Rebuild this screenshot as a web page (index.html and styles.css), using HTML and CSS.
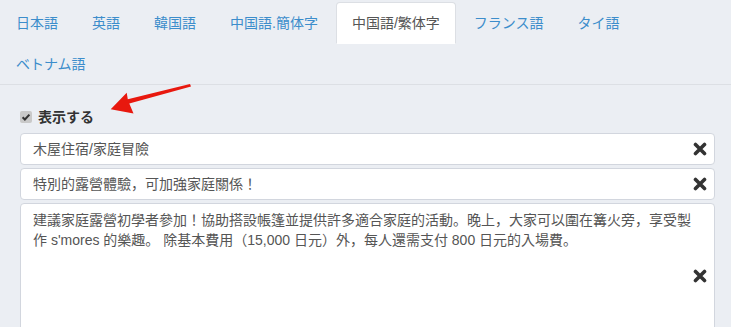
FILE: index.html
```html
<!DOCTYPE html>
<html lang="ja">
<head>
<meta charset="utf-8">
<title>翻訳</title>
<link rel="stylesheet" href="styles.css">
</head>
<body>
<div class="page">
  <ul class="tabs">
    <li class="tab"><a>日本語</a></li>
    <li class="tab"><a>英語</a></li>
    <li class="tab"><a>韓国語</a></li>
    <li class="tab"><a>中国語.簡体字</a></li>
    <li class="tab active"><a>中国語/繁体字</a></li>
    <li class="tab"><a>フランス語</a></li>
    <li class="tab"><a>タイ語</a></li>
    <li class="tab"><a>ベトナム語</a></li>
  </ul>
  <div class="pane">
    <div class="show-row">
      <span class="check"><svg viewBox="0 0 12 12" width="12" height="12"><path d="M2.6 6.2 L4.9 8.5 L9.4 3.6" fill="none" stroke="#333" stroke-width="2"/></svg></span>
      <span class="show-label">表示する</span>
      <svg class="arrow" viewBox="0 0 95 35" width="95" height="35"><path d="M10.7 29.3 L26.7 12.8 L27.8 19.3 L90 4 L91 6.6 L29.3 23.6 L33.5 33.5 Z" fill="#e8180e"/></svg>
    </div>
    <div class="field">
      <div class="control">木屋住宿/家庭冒險</div>
      <svg class="remove" viewBox="0 0 14 14" width="14" height="14"><path d="M2.5 2.5 L11.5 11.5 M11.5 2.5 L2.5 11.5" stroke="#333" stroke-width="3.6" stroke-linecap="round"/></svg>
    </div>
    <div class="field">
      <div class="control">特別的露營體驗，可加強家庭關係！</div>
      <svg class="remove" viewBox="0 0 14 14" width="14" height="14"><path d="M2.5 2.5 L11.5 11.5 M11.5 2.5 L2.5 11.5" stroke="#333" stroke-width="3.6" stroke-linecap="round"/></svg>
    </div>
    <div class="field area-field">
      <div class="control area">建議家庭露營初學者參加！協助搭設帳篷並提供許多適合家庭的活動。晚上，大家可以圍在篝火旁，享受製作 s'mores 的樂趣。 除基本費用（15,000 日元）外，每人還需支付 800 日元的入場費。</div>
      <svg class="remove remove-area" viewBox="0 0 14 14" width="14" height="14"><path d="M2.5 2.5 L11.5 11.5 M11.5 2.5 L2.5 11.5" stroke="#333" stroke-width="3.6" stroke-linecap="round"/></svg>
    </div>
  </div>
</div>
</body>
</html>
```

FILE: styles.css
```css
html, body {
  margin: 0;
  padding: 0;
  background: #ebeef3;
  font-family: "Liberation Sans", "Noto Sans CJK JP", sans-serif;
  font-size: 14px;
  line-height: 20px;
  color: #333;
}

.page {
  padding-top: 2px;
  height: 325px;
  overflow: hidden;
}

.tabs {
  list-style: none;
  margin: 0;
  padding: 0;
  display: flex;
  flex-wrap: wrap;
  border-bottom: 1px solid #dcdfe4;
}

.tab {
  margin-bottom: -1px;
}

.tab a {
  display: block;
  margin-right: 2px;
  padding: 10px 15px;
  border: 1px solid transparent;
  border-radius: 4px 4px 0 0;
  color: #3c8dcb;
  line-height: 20px;
}

.tab.active a {
  background: #fff;
  border-color: #dcdfe4;
  border-bottom-color: transparent;
  color: #555;
}

.pane {
  padding: 22px 16px 0 20px;
}

.show-row {
  position: relative;
  display: flex;
  align-items: center;
  height: 20px;
  margin-bottom: 6px;
}

.check {
  width: 12px;
  height: 12px;
  background: #c9c9c9;
  border-radius: 2px;
  display: flex;
  margin-right: 6px;
}

.show-label {
  font-weight: bold;
  color: #333;
}

.arrow {
  position: absolute;
  left: 80px;
  top: -27px;
}

.field {
  position: relative;
  margin-bottom: 3px;
}

.control {
  box-sizing: border-box;
  height: 32px;
  padding: 5px 12px;
  background: #fff;
  border: 1px solid #d2d6de;
  border-radius: 4px;
  color: #555;
  line-height: 20px;
  white-space: nowrap;
}

.control.area {
  height: 150px;
  white-space: normal;
  padding-top: 6px;
}

.area-field {
  margin-bottom: 0;
}

.remove {
  position: absolute;
  right: 8px;
  top: 9px;
}

.remove-area {
  top: 66px;
}
```
